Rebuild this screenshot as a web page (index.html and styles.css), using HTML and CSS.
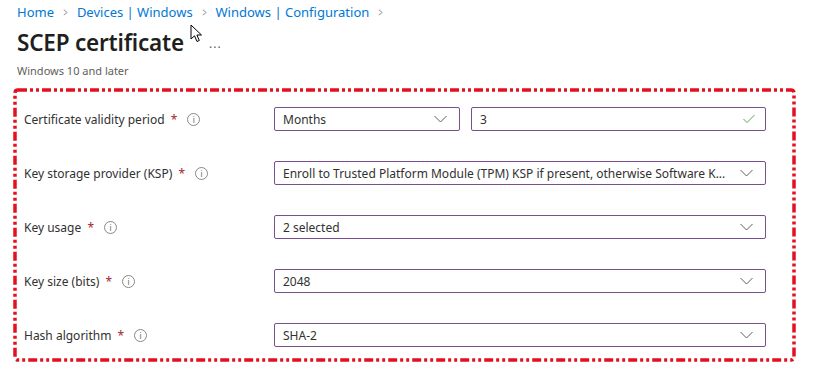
FILE: index.html
```html
<!DOCTYPE html>
<html lang="en">
<head>
  <meta charset="UTF-8" />
  <title>SCEP certificate</title>
  <link rel="stylesheet" href="styles.css">
</head>
<body>
  <nav class="crumbs">
    <a>Home</a><span class="sep">&gt;</span>
    <a>Devices | Windows</a><span class="sep">&gt;</span>
    <a>Windows | Configuration</a><span class="sep">&gt;</span>
  </nav>

  <div class="title-row">
    <h1>SCEP certificate</h1>
    <span class="more">...</span>
    <svg class="cursor" width="14" height="20" viewBox="0 0 14 20">
      <path d="M1 1 L1 15 L4.5 11.8 L7 17.5 L9.3 16.5 L6.9 11 L11.5 11 Z" fill="#fff" stroke="#000" stroke-width="1" stroke-linejoin="round"/>
    </svg>
  </div>
  <div class="subtitle">Windows 10 and later</div>

  <div class="form">
    <svg class="mark" width="783" height="274" viewBox="0 0 783 274">
      <rect x="2" y="2" width="779" height="270" rx="3" fill="none" stroke="#e3101f" stroke-width="3.5" stroke-dasharray="9 3 3 3 3 3"/>
    </svg>

    <div class="row">
      <label class="lbl">Certificate validity period <span class="req">*</span><i class="info">i</i></label>
      <div class="fields">
        <div class="box sel small"><span class="val">Months</span><svg class="chev" width="13" height="8" viewBox="0 0 13 8"><polyline points="0.5,1 6.5,7 12.5,1" fill="none" stroke="#605e5c" stroke-width="1"/></svg></div>
        <div class="box grow"><span class="val">3</span><svg class="check" width="12" height="10" viewBox="0 0 12 10"><polyline points="0.5,5 4,8.5 11.5,1" fill="none" stroke="#57a55a" stroke-width="1"/></svg></div>
      </div>
    </div>

    <div class="row">
      <label class="lbl">Key storage provider (KSP) <span class="req">*</span><i class="info">i</i></label>
      <div class="fields">
        <div class="box sel grow"><span class="val">Enroll to Trusted Platform Module (TPM) KSP if present, otherwise Software K...</span><svg class="chev" width="13" height="8" viewBox="0 0 13 8"><polyline points="0.5,1 6.5,7 12.5,1" fill="none" stroke="#605e5c" stroke-width="1"/></svg></div>
      </div>
    </div>

    <div class="row">
      <label class="lbl">Key usage <span class="req">*</span><i class="info">i</i></label>
      <div class="fields">
        <div class="box sel grow"><span class="val">2 selected</span><svg class="chev" width="13" height="8" viewBox="0 0 13 8"><polyline points="0.5,1 6.5,7 12.5,1" fill="none" stroke="#605e5c" stroke-width="1"/></svg></div>
      </div>
    </div>

    <div class="row">
      <label class="lbl">Key size (bits) <span class="req">*</span><i class="info">i</i></label>
      <div class="fields">
        <div class="box sel grow"><span class="val">2048</span><svg class="chev" width="13" height="8" viewBox="0 0 13 8"><polyline points="0.5,1 6.5,7 12.5,1" fill="none" stroke="#605e5c" stroke-width="1"/></svg></div>
      </div>
    </div>

    <div class="row">
      <label class="lbl">Hash algorithm <span class="req">*</span><i class="info">i</i></label>
      <div class="fields">
        <div class="box sel grow"><span class="val">SHA-2</span><svg class="chev" width="13" height="8" viewBox="0 0 13 8"><polyline points="0.5,1 6.5,7 12.5,1" fill="none" stroke="#605e5c" stroke-width="1"/></svg></div>
      </div>
    </div>
  </div>
</body>
</html>
```

FILE: styles.css
```css
body { margin: 0; background: #fff; color: #323130; font-family: "Noto Sans", "Open Sans", sans-serif; font-size: 12px; }

.crumbs { padding: 2px 0 0 17px; height: 20px; font-size: 13px; color: #0078d4; display: flex; align-items: center; }
.crumbs a { color: #0078d4; }
.crumbs .sep { color: #8a8886; margin: 0 8px; font-size: 12px; transform: scaleX(0.6); display: inline-block; }

.title-row { position: relative; display: flex; align-items: center; padding-left: 17px; height: 40px; }
h1 { margin: 0; font-size: 22.5px; font-weight: 600; color: #201f1e; letter-spacing: -0.2px; }
.more { color: #605e5c; font-size: 12px; letter-spacing: 1px; margin-left: 25px; margin-top: 2px; }
.cursor { position: absolute; left: 190px; top: 2px; }

.subtitle { padding-left: 17px; font-size: 11px; color: #605e5c; height: 26px; line-height: 18px; }

.form { position: relative; margin-left: 13px; width: 783px; height: 274px; box-sizing: border-box; padding: 19px 30px 13px 11px; display: flex; flex-direction: column; gap: 30px; }
.mark { position: absolute; left: 0; top: 0; }

.row { display: flex; align-items: center; height: 24px; }
.lbl { width: 250px; flex-shrink: 0; display: flex; align-items: center; font-size: 12px; color: #323130; white-space: pre; }
.req { color: #a4262c; margin-left: 3px; }
.info { font-style: normal; width: 11px; height: 11px; border: 1px solid #8a8886; border-radius: 50%; font-size: 8px; line-height: 11px; text-align: center; color: #605e5c; margin-left: 10px; }

.fields { flex: 1; min-width: 0; display: flex; gap: 11px; }
.box { height: 24px; box-sizing: border-box; border: 1px solid #7a4f8f; border-radius: 2px; display: flex; align-items: center; padding: 0 12px 0 8px; min-width: 0; }
.small { width: 186px; flex-shrink: 0; }
.grow { flex: 1; }
.val { flex: 1; min-width: 0; white-space: nowrap; }
.sel .val { margin-right: 10px; }
.chev { flex-shrink: 0; }
.check { flex-shrink: 0; margin-right: -2px; }
```
